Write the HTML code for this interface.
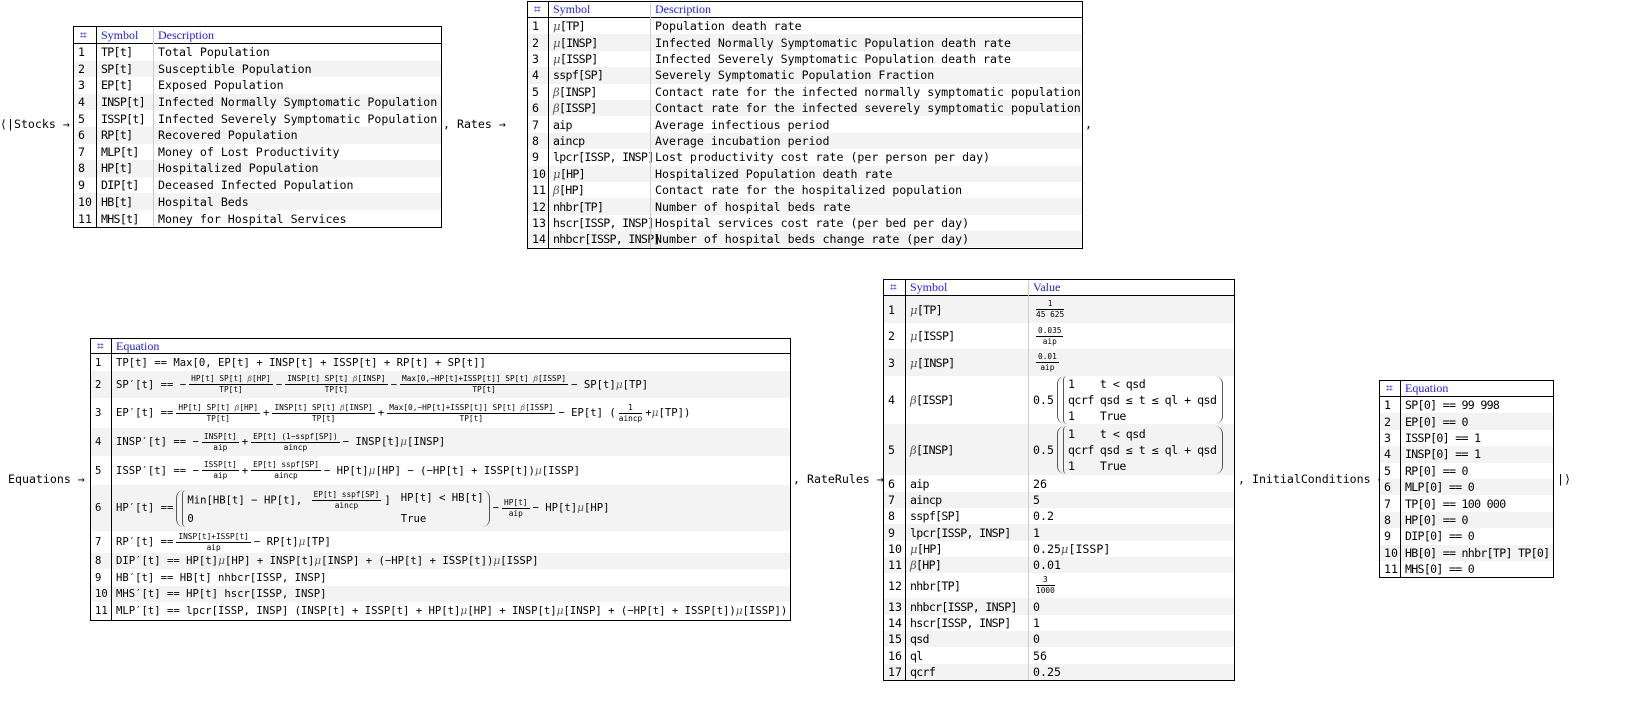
<!DOCTYPE html>
<html><head><meta charset="utf-8"><style>
*{margin:0;padding:0;box-sizing:border-box}
body{width:1629px;height:709px;background:#fff;position:relative;overflow:hidden;font-family:"DejaVu Sans Mono","Liberation Mono",monospace;font-size:11.6px;color:#000}
.t{position:absolute;border:1px solid #000;background:#fff}
.r{position:absolute;left:0;right:0;display:flex;align-items:center}
.r.g{background:#f3f3f3}
.h{font-family:"Liberation Serif",serif;color:#1a1aff;font-size:12px;border-bottom:1px solid #000}
.c{position:absolute;top:0;bottom:0;display:flex;align-items:center;padding-left:4px;white-space:nowrap}
.t:not(.eq) .r:not(.h) .c:nth-child(2){letter-spacing:-0.7px}
.vl{position:absolute;top:0;bottom:0;width:1px;background:#000}
.vl2{position:absolute;top:0;bottom:0;width:1px;background:#ccc}
.lab{position:absolute;white-space:nowrap;font-size:11.6px}
.eq{font-size:10.6px}
.fr{display:inline-flex;flex-direction:column;vertical-align:middle;text-align:center;font-size:7.8px;line-height:10px;margin:0 3px;letter-spacing:0}
.fr>span:first-child{border-bottom:1px solid #000;padding:0 2px}
.mu{font-family:"DejaVu Serif",serif;font-style:italic;color:#555}
.pw{display:inline-flex;align-items:center;vertical-align:middle;border-left:1px solid #555;border-right:1px solid #555;border-radius:8px;padding:0 5px;margin:0 3px}
.br{border-left:1px solid #555;border-radius:4px 0 0 4px;padding-left:4px;display:grid;grid-template-columns:auto auto;column-gap:10px;line-height:16px}
.rr .br{column-gap:6px;letter-spacing:-0.5px}
</style></head><body>

<div class="lab" style="left:0;top:117px">⟨|Stocks →</div>
<div class="lab" style="left:443px;top:117px">, Rates →</div>
<div class="lab" style="left:1085px;top:117px">,</div>
<div class="lab" style="left:8px;top:472px">Equations →</div>
<div class="lab" style="left:793px;top:472px">, RateRules →</div>
<div class="lab" style="left:1238px;top:472px">, InitialConditions →</div>
<div class="lab" style="left:1557px;top:472px">|⟩</div>

<!-- Stocks -->
<div class="t" style="left:73px;top:26px;width:369px;height:202px">
<div class="r h" style="top:0;height:17px"><div class="c" style="left:2px">⌗</div><div class="c" style="left:23px">Symbol</div><div class="c" style="left:80px">Description</div></div>
<div class="r" style="top:17px;height:16.6px"><div class="c" style="left:0">1</div><div class="c" style="left:23px">TP[t]</div><div class="c" style="left:80px">Total Population</div></div>
<div class="r g" style="top:33.6px;height:16.6px"><div class="c" style="left:0">2</div><div class="c" style="left:23px">SP[t]</div><div class="c" style="left:80px">Susceptible Population</div></div>
<div class="r" style="top:50.2px;height:16.6px"><div class="c" style="left:0">3</div><div class="c" style="left:23px">EP[t]</div><div class="c" style="left:80px">Exposed Population</div></div>
<div class="r g" style="top:66.8px;height:16.6px"><div class="c" style="left:0">4</div><div class="c" style="left:23px">INSP[t]</div><div class="c" style="left:80px">Infected Normally Symptomatic Population</div></div>
<div class="r" style="top:83.4px;height:16.6px"><div class="c" style="left:0">5</div><div class="c" style="left:23px">ISSP[t]</div><div class="c" style="left:80px">Infected Severely Symptomatic Population</div></div>
<div class="r g" style="top:100px;height:16.6px"><div class="c" style="left:0">6</div><div class="c" style="left:23px">RP[t]</div><div class="c" style="left:80px">Recovered Population</div></div>
<div class="r" style="top:116.6px;height:16.6px"><div class="c" style="left:0">7</div><div class="c" style="left:23px">MLP[t]</div><div class="c" style="left:80px">Money of Lost Productivity</div></div>
<div class="r g" style="top:133.2px;height:16.6px"><div class="c" style="left:0">8</div><div class="c" style="left:23px">HP[t]</div><div class="c" style="left:80px">Hospitalized Population</div></div>
<div class="r" style="top:149.8px;height:16.6px"><div class="c" style="left:0">9</div><div class="c" style="left:23px">DIP[t]</div><div class="c" style="left:80px">Deceased Infected Population</div></div>
<div class="r g" style="top:166.4px;height:16.6px"><div class="c" style="left:0">10</div><div class="c" style="left:23px">HB[t]</div><div class="c" style="left:80px">Hospital Beds</div></div>
<div class="r" style="top:183px;height:17px"><div class="c" style="left:0">11</div><div class="c" style="left:23px">MHS[t]</div><div class="c" style="left:80px">Money for Hospital Services</div></div>
<div class="vl" style="left:22px"></div><div class="vl2" style="left:79px;top:1px"></div>
</div>

<!-- Rates -->
<div class="t" style="left:527px;top:1px;width:556px;height:248px">
<div class="r h" style="top:0;height:16px"><div class="c" style="left:2px">⌗</div><div class="c" style="left:21px">Symbol</div><div class="c" style="left:123px">Description</div></div>
<div class="r" style="top:16px;height:16.4px"><div class="c" style="left:0">1</div><div class="c" style="left:21px"><span class="mu">μ</span>[TP]</div><div class="c" style="left:123px">Population death rate</div></div>
<div class="r g" style="top:32.4px;height:16.4px"><div class="c" style="left:0">2</div><div class="c" style="left:21px"><span class="mu">μ</span>[INSP]</div><div class="c" style="left:123px">Infected Normally Symptomatic Population death rate</div></div>
<div class="r" style="top:48.8px;height:16.4px"><div class="c" style="left:0">3</div><div class="c" style="left:21px"><span class="mu">μ</span>[ISSP]</div><div class="c" style="left:123px">Infected Severely Symptomatic Population death rate</div></div>
<div class="r g" style="top:65.2px;height:16.4px"><div class="c" style="left:0">4</div><div class="c" style="left:21px">sspf[SP]</div><div class="c" style="left:123px">Severely Symptomatic Population Fraction</div></div>
<div class="r" style="top:81.6px;height:16.4px"><div class="c" style="left:0">5</div><div class="c" style="left:21px"><span class="mu">β</span>[INSP]</div><div class="c" style="left:123px">Contact rate for the infected normally symptomatic population</div></div>
<div class="r g" style="top:98px;height:16.4px"><div class="c" style="left:0">6</div><div class="c" style="left:21px"><span class="mu">β</span>[ISSP]</div><div class="c" style="left:123px">Contact rate for the infected severely symptomatic population</div></div>
<div class="r" style="top:114.4px;height:16.4px"><div class="c" style="left:0">7</div><div class="c" style="left:21px">aip</div><div class="c" style="left:123px">Average infectious period</div></div>
<div class="r g" style="top:130.8px;height:16.4px"><div class="c" style="left:0">8</div><div class="c" style="left:21px">aincp</div><div class="c" style="left:123px">Average incubation period</div></div>
<div class="r" style="top:147.2px;height:16.4px"><div class="c" style="left:0">9</div><div class="c" style="left:21px">lpcr[ISSP, INSP]</div><div class="c" style="left:123px">Lost productivity cost rate (per person per day)</div></div>
<div class="r g" style="top:163.6px;height:16.4px"><div class="c" style="left:0">10</div><div class="c" style="left:21px"><span class="mu">μ</span>[HP]</div><div class="c" style="left:123px">Hospitalized Population death rate</div></div>
<div class="r" style="top:180px;height:16.4px"><div class="c" style="left:0">11</div><div class="c" style="left:21px"><span class="mu">β</span>[HP]</div><div class="c" style="left:123px">Contact rate for the hospitalized population</div></div>
<div class="r g" style="top:196.4px;height:16.4px"><div class="c" style="left:0">12</div><div class="c" style="left:21px">nhbr[TP]</div><div class="c" style="left:123px">Number of hospital beds rate</div></div>
<div class="r" style="top:212.8px;height:16.4px"><div class="c" style="left:0">13</div><div class="c" style="left:21px">hscr[ISSP, INSP]</div><div class="c" style="left:123px">Hospital services cost rate (per bed per day)</div></div>
<div class="r g" style="top:229.2px;height:16px"><div class="c" style="left:0">14</div><div class="c" style="left:21px">nhbcr[ISSP, INSP]</div><div class="c" style="left:123px">Number of hospital beds change rate (per day)</div></div>
<div class="vl" style="left:20px"></div><div class="vl2" style="left:122px;top:1px"></div>
</div>

<!-- Equations -->
<div class="t eq" style="left:90px;top:338px;width:701px;height:283px">
<div class="r h" style="top:0;height:15px"><div class="c" style="left:2px">⌗</div><div class="c" style="left:21px">Equation</div></div>
<div class="r" style="top:15px;height:17px"><div class="c" style="left:0">1</div><div class="c" style="left:21px">TP[t] == Max[0, EP[t] + INSP[t] + ISSP[t] + RP[t] + SP[t]]</div></div>
<div class="r g" style="top:32px;height:27px"><div class="c" style="left:0">2</div><div class="c" style="left:21px">SP′[t] == −<span class="fr"><span>HP[t] SP[t] <span class="mu">β</span>[HP]</span><span>TP[t]</span></span>−<span class="fr"><span>INSP[t] SP[t] <span class="mu">β</span>[INSP]</span><span>TP[t]</span></span>−<span class="fr"><span>Max[0,−HP[t]+ISSP[t]] SP[t] <span class="mu">β</span>[ISSP]</span><span>TP[t]</span></span>− SP[t] <span class="mu">μ</span>[TP]</div></div>
<div class="r" style="top:59px;height:30px"><div class="c" style="left:0">3</div><div class="c" style="left:21px">EP′[t] == <span class="fr"><span>HP[t] SP[t] <span class="mu">β</span>[HP]</span><span>TP[t]</span></span>+<span class="fr"><span>INSP[t] SP[t] <span class="mu">β</span>[INSP]</span><span>TP[t]</span></span>+<span class="fr"><span>Max[0,−HP[t]+ISSP[t]] SP[t] <span class="mu">β</span>[ISSP]</span><span>TP[t]</span></span>− EP[t] (<span class="fr"><span>1</span><span>aincp</span></span>+ <span class="mu">μ</span>[TP])</div></div>
<div class="r g" style="top:89px;height:28px"><div class="c" style="left:0">4</div><div class="c" style="left:21px">INSP′[t] == −<span class="fr"><span>INSP[t]</span><span>aip</span></span>+<span class="fr"><span>EP[t] (1−sspf[SP])</span><span>aincp</span></span>− INSP[t] <span class="mu">μ</span>[INSP]</div></div>
<div class="r" style="top:117px;height:29px"><div class="c" style="left:0">5</div><div class="c" style="left:21px">ISSP′[t] == −<span class="fr"><span>ISSP[t]</span><span>aip</span></span>+<span class="fr"><span>EP[t] sspf[SP]</span><span>aincp</span></span>− HP[t] <span class="mu">μ</span>[HP] − (−HP[t] + ISSP[t]) <span class="mu">μ</span>[ISSP]</div></div>
<div class="r g" style="top:146px;height:46px"><div class="c" style="left:0">6</div><div class="c" style="left:21px">HP′[t] == <span class="pw"><span class="br"><span>Min[HB[t] − HP[t], <span class="fr"><span>EP[t] sspf[SP]</span><span>aincp</span></span>]</span><span>HP[t] &lt; HB[t]</span><span>0</span><span>True</span></span></span>−<span class="fr"><span>HP[t]</span><span>aip</span></span>− HP[t] <span class="mu">μ</span>[HP]</div></div>
<div class="r" style="top:192px;height:22px"><div class="c" style="left:0">7</div><div class="c" style="left:21px">RP′[t] == <span class="fr"><span>INSP[t]+ISSP[t]</span><span>aip</span></span>− RP[t] <span class="mu">μ</span>[TP]</div></div>
<div class="r g" style="top:214px;height:16px"><div class="c" style="left:0">8</div><div class="c" style="left:21px">DIP′[t] == HP[t] <span class="mu">μ</span>[HP] + INSP[t] <span class="mu">μ</span>[INSP] + (−HP[t] + ISSP[t]) <span class="mu">μ</span>[ISSP]</div></div>
<div class="r" style="top:230px;height:17px"><div class="c" style="left:0">9</div><div class="c" style="left:21px">HB′[t] == HB[t] nhbcr[ISSP, INSP]</div></div>
<div class="r g" style="top:247px;height:16px"><div class="c" style="left:0">10</div><div class="c" style="left:21px">MHS′[t] == HP[t] hscr[ISSP, INSP]</div></div>
<div class="r" style="top:263px;height:18px"><div class="c" style="left:0">11</div><div class="c" style="left:21px">MLP′[t] == lpcr[ISSP, INSP] (INSP[t] + ISSP[t] + HP[t] <span class="mu">μ</span>[HP] + INSP[t] <span class="mu">μ</span>[INSP] + (−HP[t] + ISSP[t]) <span class="mu">μ</span>[ISSP])</div></div>
<div class="vl" style="left:20px"></div>
</div>

<!-- RateRules -->
<div class="t rr" style="left:883px;top:279px;width:352px;height:402px">
<div class="r h" style="top:0;height:16px"><div class="c" style="left:2px">⌗</div><div class="c" style="left:22px">Symbol</div><div class="c" style="left:145px">Value</div></div>
<div class="r g" style="top:16px;height:27px"><div class="c" style="left:0">1</div><div class="c" style="left:22px"><span class="mu">μ</span>[TP]</div><div class="c" style="left:145px"><span class="fr"><span>1</span><span>45 625</span></span></div></div>
<div class="r" style="top:43px;height:26px"><div class="c" style="left:0">2</div><div class="c" style="left:22px"><span class="mu">μ</span>[ISSP]</div><div class="c" style="left:145px"><span class="fr"><span>0.035</span><span>aip</span></span></div></div>
<div class="r g" style="top:69px;height:27px"><div class="c" style="left:0">3</div><div class="c" style="left:22px"><span class="mu">μ</span>[INSP]</div><div class="c" style="left:145px"><span class="fr"><span>0.01</span><span>aip</span></span></div></div>
<div class="r" style="top:96px;height:48px"><div class="c" style="left:0">4</div><div class="c" style="left:22px"><span class="mu">β</span>[ISSP]</div><div class="c" style="left:145px">0.5 <span class="pw"><span class="br"><span>1</span><span>t &lt; qsd</span><span>qcrf</span><span>qsd ≤ t ≤ ql + qsd</span><span>1</span><span>True</span></span></span></div></div>
<div class="r g" style="top:144px;height:51px"><div class="c" style="left:0">5</div><div class="c" style="left:22px"><span class="mu">β</span>[INSP]</div><div class="c" style="left:145px">0.5 <span class="pw"><span class="br"><span>1</span><span>t &lt; qsd</span><span>qcrf</span><span>qsd ≤ t ≤ ql + qsd</span><span>1</span><span>True</span></span></span></div></div>
<div class="r" style="top:195px;height:17px"><div class="c" style="left:0">6</div><div class="c" style="left:22px">aip</div><div class="c" style="left:145px">26</div></div>
<div class="r g" style="top:212px;height:16px"><div class="c" style="left:0">7</div><div class="c" style="left:22px">aincp</div><div class="c" style="left:145px">5</div></div>
<div class="r" style="top:228px;height:16px"><div class="c" style="left:0">8</div><div class="c" style="left:22px">sspf[SP]</div><div class="c" style="left:145px">0.2</div></div>
<div class="r g" style="top:244px;height:17px"><div class="c" style="left:0">9</div><div class="c" style="left:22px">lpcr[ISSP, INSP]</div><div class="c" style="left:145px">1</div></div>
<div class="r" style="top:261px;height:16px"><div class="c" style="left:0">10</div><div class="c" style="left:22px"><span class="mu">μ</span>[HP]</div><div class="c" style="left:145px">0.25 <span class="mu">μ</span>[ISSP]</div></div>
<div class="r g" style="top:277px;height:16px"><div class="c" style="left:0">11</div><div class="c" style="left:22px"><span class="mu">β</span>[HP]</div><div class="c" style="left:145px">0.01</div></div>
<div class="r" style="top:293px;height:25px"><div class="c" style="left:0">12</div><div class="c" style="left:22px">nhbr[TP]</div><div class="c" style="left:145px"><span class="fr"><span>3</span><span>1000</span></span></div></div>
<div class="r g" style="top:318px;height:17px"><div class="c" style="left:0">13</div><div class="c" style="left:22px">nhbcr[ISSP, INSP]</div><div class="c" style="left:145px">0</div></div>
<div class="r" style="top:335px;height:16px"><div class="c" style="left:0">14</div><div class="c" style="left:22px">hscr[ISSP, INSP]</div><div class="c" style="left:145px">1</div></div>
<div class="r g" style="top:351px;height:16px"><div class="c" style="left:0">15</div><div class="c" style="left:22px">qsd</div><div class="c" style="left:145px">0</div></div>
<div class="r" style="top:367px;height:17px"><div class="c" style="left:0">16</div><div class="c" style="left:22px">ql</div><div class="c" style="left:145px">56</div></div>
<div class="r g" style="top:384px;height:16px"><div class="c" style="left:0">17</div><div class="c" style="left:22px">qcrf</div><div class="c" style="left:145px">0.25</div></div>
<div class="vl" style="left:21px"></div><div class="vl2" style="left:144px;top:1px"></div>
</div>

<!-- InitialConditions -->
<div class="t" style="left:1379px;top:380px;width:175px;height:198px">
<div class="r h" style="top:0;height:16px"><div class="c" style="left:2px">⌗</div><div class="c" style="left:21px">Equation</div></div>
<div class="r" style="top:16px;height:16.4px"><div class="c" style="left:0">1</div><div class="c" style="left:21px">SP[0] == 99 998</div></div>
<div class="r g" style="top:32.4px;height:16.4px"><div class="c" style="left:0">2</div><div class="c" style="left:21px">EP[0] == 0</div></div>
<div class="r" style="top:48.8px;height:16.4px"><div class="c" style="left:0">3</div><div class="c" style="left:21px">ISSP[0] == 1</div></div>
<div class="r g" style="top:65.2px;height:16.4px"><div class="c" style="left:0">4</div><div class="c" style="left:21px">INSP[0] == 1</div></div>
<div class="r" style="top:81.6px;height:16.4px"><div class="c" style="left:0">5</div><div class="c" style="left:21px">RP[0] == 0</div></div>
<div class="r g" style="top:98px;height:16.4px"><div class="c" style="left:0">6</div><div class="c" style="left:21px">MLP[0] == 0</div></div>
<div class="r" style="top:114.4px;height:16.4px"><div class="c" style="left:0">7</div><div class="c" style="left:21px">TP[0] == 100 000</div></div>
<div class="r g" style="top:130.8px;height:16.4px"><div class="c" style="left:0">8</div><div class="c" style="left:21px">HP[0] == 0</div></div>
<div class="r" style="top:147.2px;height:16.4px"><div class="c" style="left:0">9</div><div class="c" style="left:21px">DIP[0] == 0</div></div>
<div class="r g" style="top:163.6px;height:16.4px"><div class="c" style="left:0">10</div><div class="c" style="left:21px">HB[0] == nhbr[TP] TP[0]</div></div>
<div class="r" style="top:180px;height:16px"><div class="c" style="left:0">11</div><div class="c" style="left:21px">MHS[0] == 0</div></div>
<div class="vl" style="left:20px"></div>
</div>
</body></html>
